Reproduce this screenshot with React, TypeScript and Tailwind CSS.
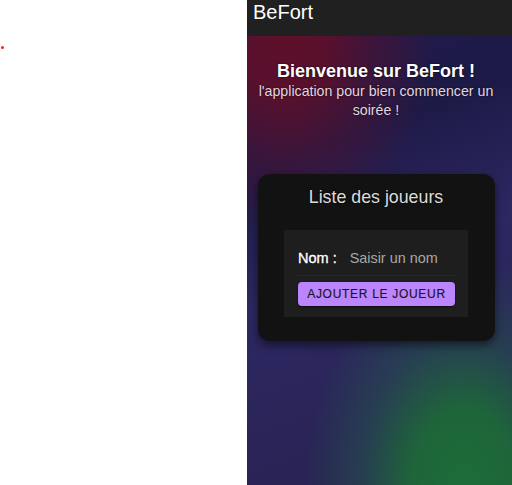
export default function App() {
  return (
    <div className="flex h-[485px] w-[512px] bg-white font-['Liberation_Sans',Arial,sans-serif]">
      <div className="w-[247px] shrink-0 pt-[46px] pl-[1px]">
        <div className="h-[3px] w-[3px] rounded-full bg-[#ff1a1a]" />
      </div>

      <div className="flex w-[265px] flex-col">
        <header className="flex h-[36px] shrink-0 items-start bg-[#202020] px-[6px] pt-[1px]">
          <span className="text-[20px] leading-[22px] text-white">BeFort</span>
        </header>

        <main className="flex-1 bg-[radial-gradient(ellipse_150px_200px_at_14%_0%,#5e0f2a_0%,rgba(94,15,42,0.9)_30%,rgba(94,15,42,0.45)_60%,transparent_100%),radial-gradient(ellipse_160px_230px_at_82%_100%,#1d6d37_0%,rgba(29,109,55,0.9)_32%,rgba(35,95,75,0.45)_64%,transparent_100%),linear-gradient(160deg,#221a4c_0%,#1d1a47_25%,#2d2862_50%,#2a2458_75%,#28224f_100%)]">
          <div className="flex w-[258px] flex-col items-center">
            <div className="mt-[24px] px-[10px] text-center [text-shadow:0_0_2px_rgba(0,0,0,0.8)]">
              <h1 className="text-[18px] font-bold leading-[22px] text-white">Bienvenue sur BeFort !</h1>
              <p className="text-[14.2px] leading-[19px] text-[#e3d6e0]">
                l'application pour bien commencer un soirée !
              </p>
            </div>

            <section className="mt-[54px] flex w-[237px] flex-col items-center rounded-[12px] bg-[#121212] pb-[24px] pt-[12px] shadow-[0_4px_10px_rgba(0,0,0,0.55)]">
              <h2 className="text-[17.8px] leading-[22px] text-[#dcdcdc] [text-shadow:0_0_2px_rgba(0,0,0,0.9)]">
                Liste des joueurs
              </h2>

              <div className="mt-[22px] flex w-[184px] flex-col bg-[#1e1e1e] px-[14px] pb-[11px] pt-[18px]">
                <div className="flex items-center border-b border-[#262626] pb-[7px]">
                  <span className="text-[14.5px] leading-[20px] text-white [-webkit-text-stroke:0.35px_white] [text-shadow:0_0_2px_#000]">
                    Nom :
                  </span>
                  <span className="ml-[13px] text-[14.4px] leading-[20px] text-[#a8a8a8]">Saisir un nom</span>
                </div>
                <button className="mt-[6px] h-[24px] w-[157px] rounded-[4px] bg-[#bb86fc] text-[12px] tracking-[0.7px] text-[#1a1420] [-webkit-text-stroke:0.15px_#1a1420] shadow-[0_1px_2px_rgba(0,0,0,0.6)]">
                  AJOUTER LE JOUEUR
                </button>
              </div>
            </section>
          </div>
        </main>
      </div>
    </div>
  );
}
